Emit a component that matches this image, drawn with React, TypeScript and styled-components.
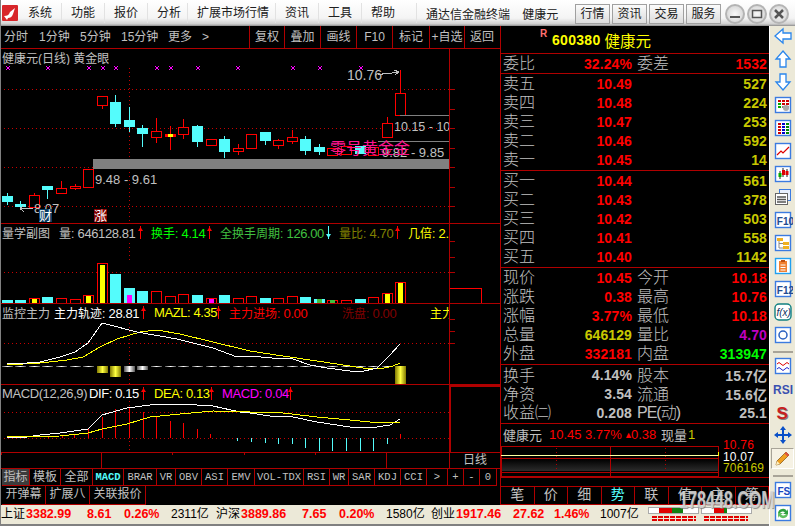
import React from 'react'
import styled, { createGlobalStyle } from 'styled-components'

const CJK = `"Liberation Sans", "Noto Sans CJK SC", sans-serif`
const RED = '#ff0000'
const LINE = '#b00000'
const GRAY = '#c0c0c0'
const CYAN = '#54fcfc'
const OLIVE = '#c8c800'

const GlobalStyle = createGlobalStyle`
  html, body { margin: 0; padding: 0; background: #000; overflow: hidden; }
  * { box-sizing: border-box; }
`

const Window = styled.div`
  position: relative;
  width: 795px;
  height: 526px;
  display: flex;
  flex-direction: column;
  font-family: ${CJK};
  background: #000;
  border-left: 1px solid #808080;
  overflow: hidden;
`

/* ---------- title bar ---------- */

const TitleBar = styled.div`
  height: 26px;
  flex: none;
  display: flex;
  align-items: center;
  background: linear-gradient(#ffffff, #f4f4f4 70%, #cfcfcf 92%, #8c8c8c);
  font-size: 12px;
  color: #202020;
`

const Logo = styled.svg`
  width: 16px;
  height: 16px;
  margin: 0 10px 0 1px;
  flex: none;
`

const MenuItem = styled.div<{ $w: number }>`
  width: ${p => p.$w}px;
  flex: none;
  height: 20px;
  line-height: 20px;
  white-space: nowrap;
  background: linear-gradient(#e2e2e2, #e2e2e2) no-repeat calc(100% - 9px) 0 / 1px 100%;
`

const TitleInfo = styled.div`
  width: 149px;
  flex: none;
  white-space: nowrap;
  word-spacing: 9px;
`

const TitleButton = styled.div`
  width: 35px;
  height: 20px;
  margin-right: 2px;
  margin-top: 2px;
  flex: none;
  border: 1px solid #a0a0a0;
  background: linear-gradient(#fbfbfb, #dcdcdc);
  text-align: center;
  line-height: 18px;
`

const RoundButton = styled.div`
  width: 20px;
  height: 20px;
  margin-left: 2px;
  margin-top: 2px;
  flex: none;
  border-radius: 50%;
  border: 2px solid #b4b4b4;
  background: radial-gradient(#f8f8f8, #cfcfcf);
  display: flex;
  align-items: center;
  justify-content: center;
`

/* ---------- layout ---------- */

const Below = styled.div`
  flex: 1;
  min-height: 0;
  display: flex;
`

const Content = styled.div`
  width: 768px;
  flex: none;
  display: flex;
  flex-direction: column;
`

const MainRow = styled.div`
  height: 479px;
  flex: none;
  display: flex;
`

const LeftColumn = styled.div`
  width: 499px;
  flex: none;
  display: flex;
  flex-direction: column;
`

/* ---------- top tabs ---------- */

const PeriodBar = styled.div`
  height: 23px;
  flex: none;
  display: flex;
  align-items: stretch;
  border-bottom: 1px solid ${LINE};
  color: ${GRAY};
  font-size: 12px;
`

const PeriodItem = styled.div<{ $w: number; $pad?: number }>`
  width: ${p => p.$w}px;
  padding-left: ${p => p.$pad || 0}px;
  flex: none;
  line-height: 22px;
  white-space: nowrap;
`

const PeriodButton = styled.div<{ $w: number }>`
  width: ${p => p.$w}px;
  flex: none;
  border-left: 1px solid ${LINE};
  text-align: center;
  line-height: 22px;
  white-space: nowrap;
`

/* ---------- chart panes ---------- */

const Pane = styled.div<{ $h: number }>`
  height: ${p => p.$h}px;
  flex: none;
  display: flex;
  border-bottom: 1px solid ${LINE};
`

const PaneMain = styled.div`
  width: 448px;
  flex: none;
  display: flex;
  flex-direction: column;
  overflow: hidden;
`

const PaneAxis = styled.div`
  flex: 1;
  border-left: 1px solid ${LINE};
  min-width: 0;
`

const BoxedAxis = styled(PaneAxis)`
  border-left: 2px solid ${LINE};
  border-top: 2px solid ${LINE};
`

const Legend = styled.div`
  height: 16px;
  flex: none;
  display: flex;
  align-items: center;
  padding-left: 1px;
  white-space: nowrap;
  overflow: hidden;
`

const LegendItem = styled.span<{ $w?: number; $c: string }>`
  ${p => (p.$w ? `width: ${p.$w}px; flex: none;` : '')}
  color: ${p => p.$c};
  font-size: 13px;
  letter-spacing: -0.4px;
  display: block;
  overflow: hidden;
`

const LegendLabel = styled.span`
  font-size: 12px;
  letter-spacing: 0;
`

const MarkSlot = styled.svg`
  width: 11px;
  height: 15px;
  flex: none;
  margin-left: -5px;
  margin-right: 5px;
`

const ChartSvg = styled.svg`
  display: block;
  flex: none;
  shape-rendering: crispEdges;
`

const TimeAxis = styled.div`
  height: 16px;
  flex: none;
  display: flex;
  border-bottom: 1px solid ${LINE};
`

const TimeCell = styled.div<{ $w: number }>`
  width: ${p => p.$w}px;
  flex: none;
  border-right: 1px solid ${LINE};
  position: relative;
`

const TimeTick = styled.i<{ $x: number }>`
  position: absolute;
  left: ${p => p.$x}px;
  top: 0;
  width: 1px;
  height: 2px;
  background: ${LINE};
`

const TimeLabel = styled.div`
  flex: 1;
  text-align: center;
  color: ${GRAY};
  font-size: 12px;
  line-height: 14px;
`

const BottomTabs = styled.div<{ $h: number }>`
  height: ${p => p.$h}px;
  flex: none;
  display: flex;
  color: ${GRAY};
  padding-left: 1px;
`

const TabCell = styled.div<{ $w: number; $on?: boolean; $c?: string; $mono?: boolean }>`
  width: ${p => p.$w}px;
  flex: none;
  height: 100%;
  border-right: 1px solid ${LINE};
  border-bottom: 1px solid ${LINE};
  background: ${p => (p.$on ? '#3c3c3c' : 'transparent')};
  color: ${p => p.$c || GRAY};
  text-align: center;
  line-height: 16px;
  white-space: nowrap;
  overflow: hidden;
  font-family: ${p => (p.$mono ? `"Liberation Mono", monospace` : CJK)};
  font-size: ${p => (p.$mono ? '10.5px' : '12px')};
  font-weight: ${p => (p.$c ? 700 : 400)};
`

/* ---------- quote panel ---------- */

const QuotePanel = styled.div`
  flex: 1;
  min-width: 0;
  border-left: 1px solid ${LINE};
  display: flex;
  flex-direction: column;
`

const QuoteTitle = styled.div`
  height: 28px;
  flex: none;
  border-bottom: 1px solid ${LINE};
  padding-left: 39px;
  display: flex;
  align-items: center;
  color: #ffff00;
  white-space: nowrap;
`

const RMark = styled.span`
  color: #ff7070;
  font-size: 10px;
  font-weight: 700;
  width: 12px;
  margin-top: -12px;
`

const QuoteCode = styled.span`
  font-size: 14px;
  font-weight: 700;
  letter-spacing: 0.3px;
`

const QuoteName = styled.span`
  font-size: 15.5px;
  margin-left: 4px;
`

const Section = styled.div<{ $rows: number; $pad?: number }>`
  flex: none;
  height: ${p => p.$rows * 19 + (p.$pad || 0)}px;
  border-bottom: 1px solid ${LINE};
  padding-left: 2px;
`

const QuoteRow = styled.div`
  height: 19px;
  display: grid;
  grid-template-columns: 34px 95px 5px 34px 96px;
  align-items: center;
  white-space: nowrap;
`

const RowLabel = styled.span<{ $tight?: boolean }>`
  color: ${GRAY};
  font-size: 16px;
  line-height: 19px;
  font-weight: 300;
  letter-spacing: ${p => (p.$tight ? '-1px' : '0')};
`

const RowValue = styled.span<{ $c: string }>`
  color: ${p => p.$c};
  font-size: 14px;
  font-weight: 700;
  text-align: right;
  letter-spacing: 0.1px;
`

const TickerRow = styled.div`
  height: 22px;
  flex: none;
  display: flex;
  align-items: center;
  padding-left: 2px;
  padding-bottom: 1px;
  font-size: 13px;
  white-space: nowrap;
`

const TickerCell = styled.span<{ $w: number; $c: string; $small?: boolean }>`
  width: ${p => p.$w}px;
  flex: none;
  color: ${p => p.$c};
  font-size: ${p => (p.$small ? '9px' : '13px')};
`

const MiniRow = styled.div`
  height: 31px;
  flex: none;
  display: flex;
`

const MiniLabels = styled.div`
  padding-left: 4px;
  margin-top: -6px;
  display: flex;
  flex-direction: column;
`

const MiniLabel = styled.span<{ $c: string }>`
  color: ${p => p.$c};
  font-size: 12px;
  line-height: 11.5px;
  letter-spacing: 0.2px;
`

const MiniGap = styled.div`
  height: 10px;
  flex: none;
  border-top: 1px solid ${LINE};
  border-bottom: 1px solid ${LINE};
`

const PanelTabs = styled.div`
  flex: 1;
  display: flex;
  border-bottom: 1px solid ${LINE};
`

const PanelTab = styled.div<{ $on?: boolean }>`
  flex: 1;
  border-right: 1px solid ${LINE};
  text-align: center;
  font-size: 14px;
  line-height: 15px;
  color: ${p => (p.$on ? CYAN : GRAY)};
`

/* ---------- status bar ---------- */

const StatusBar = styled.div`
  height: 21px;
  flex: none;
  display: flex;
  align-items: flex-start;
  background: linear-gradient(#ece9d8 0, #ece9d8 19px, #808080 19px);
  white-space: nowrap;
  color: #000;
`

const StatusCell = styled.span<{ $w: number; $hot?: boolean }>`
  width: ${p => p.$w}px;
  flex: none;
  line-height: 19px;
  color: ${p => (p.$hot ? RED : '#000')};
  font-weight: ${p => (p.$hot ? 700 : 400)};
  font-size: ${p => (p.$hot ? '12.5px' : '12px')};
`

const StatusMini = styled.svg`
  flex: none;
  width: 120px;
  height: 18px;
  shape-rendering: crispEdges;
`

/* ---------- sidebar ---------- */

const Sidebar = styled.div`
  flex: 1;
  min-width: 0;
  background: #ece9d8;
  display: flex;
  flex-direction: column;
  gap: 3px;
  align-items: center;
  border-left: 1px solid #fff;
`

const ToolIcon = styled.svg`
  width: 20px;
  height: 20px;
  flex: none;
  text {
    font-family: "Liberation Sans", sans-serif;
  }
`

const ToolSep = styled.div`
  width: 20px;
  height: 5px;
  flex: none;
  border-bottom: 2px solid #a8a498;
`

const PencilBox = styled.div`
  width: 23px;
  height: 21px;
  flex: none;
  display: flex;
  align-items: center;
  justify-content: center;
  background: #f6f2e4;
  border-top: 1px solid #a8a498;
  border-left: 1px solid #a8a498;
  border-right: 1px solid #fff;
  border-bottom: 1px solid #fff;
`

const Watermark = styled.div`
  position: absolute;
  left: 657px;
  top: 487px;
  width: 140px;
  font-family: "Liberation Sans", sans-serif;
  font-size: 23px;
  font-weight: 700;
  color: rgba(215, 215, 215, 0.9);
  text-shadow: 1px 1px 1px rgba(120, 120, 120, 0.8);
  transform: scaleX(0.7);
  white-space: nowrap;
  pointer-events: none;
`

/* ---------- data ---------- */

const LEFTS = [2, 15, 29, 42, 56, 70, 83, 97, 110, 124, 137, 151, 165, 178, 192, 206, 219, 233, 246, 260, 273, 287, 300, 314, 327, 341, 355, 368, 382, 395]

// box top, box bottom, high, low, up = red hollow
const CANDLES: [number, number, number, number, boolean][] = [
  [196, 202, 193, 205, false],
  [204, 207, 201, 210, false],
  [195, 207, 193, 207, true],
  [186, 190, 186, 199, false],
  [188, 193, 181, 193, true],
  [186, 188, 184, 190, true],
  [169, 187, 169, 187, true],
  [96, 105, 96, 109, true],
  [102, 124, 95, 127, false],
  [120, 127, 107, 132, false],
  [128, 134, 125, 147, false],
  [131, 137, 118, 143, true],
  [135, 136, 126, 150, true],
  [127, 134, 119, 139, true],
  [126, 142, 125, 147, false],
  [139, 145, 139, 145, true],
  [139, 152, 136, 158, false],
  [148, 151, 144, 155, true],
  [134, 148, 134, 148, true],
  [132, 141, 132, 145, false],
  [140, 145, 139, 149, true],
  [137, 141, 130, 144, true],
  [139, 151, 136, 155, false],
  [147, 152, 144, 155, false],
  [148, 155, 148, 155, true],
  [146, 154, 146, 154, true],
  [146, 154, 146, 154, false],
  [147, 155, 147, 155, true],
  [123, 137, 117, 137, true],
  [93, 115, 70, 115, true],
]

// top of volume bar, inner bar colour, inner top
const VOLUMES: [number, string?, number?][] = [
  [300], [300], [298, '#ffff00', 299], [297], [298], [299], [295, '#ffff00', 296], [263, '#ffff00', 265],
  [274], [288, '#ff00ff', 295], [291], [291], [296], [294], [295], [298, '#ff00ff', 299],
  [295], [298], [296], [298], [298], [296], [297], [299, '#40c040', 299],
  [300, '#40c040', 300], [300], [299], [297], [293, '#ffff00', 294], [282, '#ffff00', 283],
]

const MARKS = [8, 48, 89, 103, 116, 157, 171, 198, 238, 293, 320, 361]

const WHITE_A = '7,363 27,363 40,362 60,357 75,352 88,343 102,323 137,332 177,339 213,348 237,357 250,356 272,358 293,359 310,365 327,368 350,371 360,372 377,368 390,355 400,344'
const YELLOW_A = '7,365 40,363 67,360 83,357 100,347 117,339 140,332 157,330 180,334 213,342 250,351 283,356 317,361 343,365 363,368 380,369 393,366 400,363'
const WHITE_B = '7,437 27,437 40,435 60,433 88,429 102,415 127,408 150,405 180,404 213,406 240,412 250,413 270,416 293,417 317,422 350,427 377,427 390,425 400,419'
const YELLOW_B = '7,437 60,436 88,433 102,429 127,424 150,417 180,414 213,411 250,412 283,413 317,417 350,420 370,422 400,422'

// MACD bars: x, end y (from zero line at 438)
const MACD: [number, number, string][] = [
  [48, 436, RED], [62, 435, RED], [74, 435, RED], [88, 428, RED], [102, 417, RED], [115, 409, RED], [129, 408, RED],
  [143, 412, RED], [156, 416, RED], [170, 421, RED], [183, 423, RED], [197, 429, RED], [210, 434, RED],
  [237, 441, CYAN], [251, 442, CYAN], [265, 443, CYAN], [278, 444, CYAN], [292, 444, CYAN], [305, 448, CYAN],
  [319, 451, CYAN], [332, 451, CYAN], [346, 451, CYAN], [360, 451, CYAN], [373, 451, CYAN], [387, 444, CYAN], [400, 434, RED],
]

const ASKS = [['卖五', '10.49', '527'], ['卖四', '10.48', '224'], ['卖三', '10.47', '253'], ['卖二', '10.46', '592'], ['卖一', '10.45', '14']]
const BIDS = [['买一', '10.44', '561'], ['买二', '10.43', '378'], ['买三', '10.42', '503'], ['买四', '10.41', '558'], ['买五', '10.40', '1142']]
const STATS: [string, string, string, string, string, string][] = [
  ['现价', '10.45', RED, '今开', '10.18', RED],
  ['涨跌', '0.38', RED, '最高', '10.76', RED],
  ['涨幅', '3.77%', RED, '最低', '10.18', RED],
  ['总量', '646129', OLIVE, '量比', '4.70', '#c000c0'],
  ['外盘', '332181', RED, '内盘', '313947', '#00ff00'],
]
const EXTRAS = [
  ['换手', '4.14%', '股本', '15.7亿'],
  ['净资', '3.54', '流通', '15.6亿'],
  ['收益㈡', '0.208', 'PE(动)', '25.1'],
]

const INDICATORS: [string, number, string?][] = [
  ['MACD', 31, CYAN], ['BRAR', 33], ['VR', 19], ['OBV', 26], ['ASI', 26], ['EMV', 27], ['VOL-TDX', 49],
  ['RSI', 26], ['WR', 19], ['SAR', 26], ['KDJ', 26], ['CCI', 26], ['>', 21], ['+', 16], ['-', 16], ['0', 17],
]

/* ---------- small drawings ---------- */

const Mark = ({ c, down }: { c: string; down?: boolean }) => (
  <MarkSlot viewBox="0 0 11 15">
    <line x1="5.5" y1="1" x2="5.5" y2="14" stroke={c} strokeWidth="1" />
    <path d={down ? 'M3 9h5l-2.5 4z' : 'M3 6h5L5.5 2z'} fill={c} />
  </MarkSlot>
)

const Dotted = ({ y }: { y: number }) => (
  <line x1="0" y1={y + 0.5} x2="449" y2={y + 0.5} stroke="#c80000" strokeDasharray="1 3" />
)

const VDotted = ({ y1, y2 }: { y1: number; y2: number }) => (
  <line x1="129.5" y1={y1} x2="129.5" y2={y2} stroke="#c80000" strokeDasharray="1 3" />
)

function Candle({ i }: { i: number }) {
  const [t, b, hi, lo, up] = CANDLES[i]
  const x = LEFTS[i]
  const cx = x + 5.5
  const c = up ? RED : CYAN
  return (
    <g>
      <line x1={cx} y1={hi} x2={cx} y2={lo} stroke={c} />
      {up ? (
        <rect x={x + 0.5} y={t + 0.5} width={10} height={b - t} fill="#000" stroke={RED} />
      ) : (
        <rect x={x} y={t} width={11} height={b - t} fill={CYAN} />
      )}
    </g>
  )
}

function MainChart() {
  return (
    <ChartSvg width="448" height="158" viewBox="1 65 448 158">
      <Dotted y={89} />
      <Dotted y={128} />
      <Dotted y={167} />
      <Dotted y={206} />
      <VDotted y1={68} y2={222} />
      {MARKS.map(x => (
        <path key={x} d={`M${x - 2} 66l4 4M${x + 2} 66l-4 4`} stroke="#ff00ff" fill="none" strokeWidth="1" />
      ))}
      {LEFTS.map((_, i) => <Candle key={i} i={i} />)}
      <rect x="165" y="134" width="11" height="3" fill={RED} />
      <rect x="168" y="134" width="5" height="3" fill="#ffff00" />
      <rect x="93" y="159" width="356" height="10" fill="#808080" />
      <line x1="400" y1="115.5" x2="449" y2="115.5" stroke="#808080" />
      <line x1="378" y1="141.5" x2="449" y2="141.5" stroke="#808080" />
      <text x="347" y="80" fill={GRAY} fontSize="14" fontFamily="Liberation Sans">10.76</text>
      <path d="M378 75l9-2 5 0 6-1m-4-2l5 2-4 3" stroke={GRAY} fill="none" />
      <text x="394" y="131" fill={GRAY} fontSize="12.5" fontFamily="Liberation Sans">10.15 - 10</text>
      <text x="95" y="184" fill={GRAY} fontSize="13" fontFamily="Liberation Sans">9.48 - 9.61</text>
      <text x="382" y="157" fill={GRAY} fontSize="13" fontFamily="Liberation Sans">9.82 - 9.85</text>
      <text x="330" y="154" fill="#ff1490" fontSize="16" fontFamily="Noto Sans CJK SC">零号黄金金</text>
      <text x="34" y="213" fill={GRAY} fontSize="13" fontFamily="Liberation Sans">8.07</text>
      <path d="M20 208.5h13m-13 0l4-3m-4 3l4 3" stroke={GRAY} fill="none" />
      <rect x="39" y="209" width="13" height="13" fill="#0a3a60" />
      <text x="39" y="220" fill="#fff" fontSize="13" fontFamily="Noto Sans CJK SC">财</text>
      <rect x="94" y="209" width="13" height="13" fill="#800000" />
      <text x="94" y="220" fill="#fff" fontSize="13" fontFamily="Noto Sans CJK SC">涨</text>
    </ChartSvg>
  )
}

function VolumeChart() {
  return (
    <ChartSvg width="448" height="63" viewBox="1 240 448 63">
      <Dotted y={272} />
      <VDotted y1={243} y2={262} />
      {VOLUMES.map(([top, inner, innerTop], i) => {
        const x = LEFTS[i]
        const up = CANDLES[i][4]
        return (
          <g key={x}>
            {up ? (
              <rect x={x + 0.5} y={top + 0.5} width={10} height={303 - top} fill="#000" stroke={RED} />
            ) : (
              <rect x={x} y={top} width={11} height={303 - top} fill={CYAN} />
            )}
            {inner && <rect x={x + 3} y={innerTop} width={5} height={303 - (innerTop as number)} fill={inner} />}
          </g>
        )
      })}
    </ChartSvg>
  )
}

const PILLARS: [number, number, string][] = [
  [97, 373, 'gold'], [110, 377, 'gold'], [124, 372, 'silver'], [137, 370, 'silver'], [395, 384, 'gold'],
]

function FlowChart() {
  return (
    <ChartSvg width="448" height="64" viewBox="1 320 448 64">
      <defs>
        <linearGradient id="gold">
          <stop offset="0" stopColor="#807800" />
          <stop offset="0.5" stopColor="#ffff40" />
          <stop offset="1" stopColor="#807800" />
        </linearGradient>
        <linearGradient id="silver">
          <stop offset="0" stopColor="#505050" />
          <stop offset="0.5" stopColor="#ffffff" />
          <stop offset="1" stopColor="#505050" />
        </linearGradient>
      </defs>
      <Dotted y={343} />
      <VDotted y1={323} y2={384} />
      {LEFTS.map(x => <rect key={x} x={x} y={366} width={11} height={1} fill="url(#silver)" />)}
      {PILLARS.map(([x, b, g]) => <rect key={x} x={x} y={366} width={11} height={b - 366} fill={`url(#${g})`} />)}
      <polyline points={YELLOW_A} fill="none" stroke="#ffff00" strokeWidth="1" />
      <polyline points={WHITE_A} fill="none" stroke="#ffffff" strokeWidth="1" />
    </ChartSvg>
  )
}

function MacdChart() {
  return (
    <ChartSvg width="448" height="51" viewBox="1 401 448 51">
      <Dotted y={412} />
      <Dotted y={438} />
      <VDotted y1={401} y2={452} />
      {MACD.map(([x, y, c]) => (
        <line key={x} x1={x + 0.5} y1={438} x2={x + 0.5} y2={y} stroke={c} />
      ))}
      <polyline points={WHITE_B} fill="none" stroke="#ffffff" strokeWidth="1" />
      <polyline points={YELLOW_B} fill="none" stroke="#ffff00" strokeWidth="1" />
    </ChartSvg>
  )
}

const Ticks = ({ top, h, ys }: { top: number; h: number; ys: number[] }) => (
  <ChartSvg width="50" height={h} viewBox={`450 ${top} 50 ${h}`}>
    {ys.map(y => <line key={y} x1="450" y1={y + 0.5} x2="455" y2={y + 0.5} stroke={LINE} />)}
  </ChartSvg>
)

function MiniChart() {
  return (
    <ChartSvg width="218" height="31" viewBox="0 0 218 31">
      <rect x="0.5" y="0.5" width="217" height="30" fill="#000" stroke={LINE} />
      <defs>
        <linearGradient id="fade" x1="0" y1="0" x2="0" y2="1">
          <stop offset="0" stopColor="#000" />
          <stop offset="1" stopColor="#2c2c2c" />
        </linearGradient>
      </defs>
      <rect x="1" y="13" width="216" height="12" fill="url(#fade)" />
      <line x1="0" y1="12.5" x2="218" y2="12.5" stroke={LINE} />
      <line x1="0" y1="26.5" x2="218" y2="26.5" stroke={LINE} />
      <line x1="109.5" y1="0" x2="109.5" y2="31" stroke={LINE} />
      <line x1="55.5" y1="2" x2="55.5" y2="30" stroke={LINE} strokeDasharray="1 3" />
      <line x1="164.5" y1="2" x2="164.5" y2="30" stroke={LINE} strokeDasharray="1 3" />
      <line x1="0" y1="9.5" x2="217" y2="9.5" stroke="#ffffa0" />
      <line x1="217" y1="6" x2="217" y2="10" stroke="#ffff00" />
    </ChartSvg>
  )
}

const blue = '#3b7be0'

const Frame = ({ children, c = blue }: { children: React.ReactNode; c?: string }) => (
  <ToolIcon viewBox="0 0 20 20">
    <rect x="2.5" y="2.5" width="15" height="15" fill="#fff" stroke={c} strokeWidth="1.4" />
    {children}
  </ToolIcon>
)

const Poly = ({ points }: { points: string }) => (
  <ToolIcon viewBox="0 0 20 20">
    <polygon points={points} fill="#fff" stroke="#2a86ec" strokeWidth="1.3" />
  </ToolIcon>
)

const Rows = ({ cs }: { cs: string[] }) => (
  <>
    {cs.map((c, i) => (
      <rect key={i} x={5 + (i % 3) * 4} y={5 + Math.floor(i / 3) * 3} width="3" height="2" fill={c} />
    ))}
  </>
)

function SidebarTools() {
  return (
    <Sidebar>
      <Poly points="2,10 10,3 10,7 18,7 18,13 10,13 10,17" />
      <Poly points="10,2 17,10 13,10 13,18 7,18 7,10 3,10" />
      <Poly points="10,18 17,10 13,10 13,2 7,2 7,10 3,10" />
      <Frame>
        <Rows cs={['#c00', '#c00', '#c00', '#0a0', '#c00', '#c00', '#0a0', '#888', '#888']} />
        <circle cx="13" cy="13" r="3" fill="#aaa" />
      </Frame>
      <Frame>
        <Rows cs={['#c00', '#00c', '#080', '#c00', '#00c', '#080', '#c00', '#00c', '#080', '#c00', '#00c', '#080']} />
      </Frame>
      <Frame>
        <path d="M4 14l4-4 2 2 6-6" stroke="#d00" fill="none" strokeWidth="1.2" />
      </Frame>
      <Frame>
        <path d="M7 7v8M10 4v9M14 5v8" stroke="#222" />
        <rect x="5.5" y="9" width="3" height="4" fill="#0a0" />
        <rect x="9" y="6" width="3" height="5" fill="#d00" />
        <rect x="12.5" y="7" width="3" height="4" fill="#d00" />
      </Frame>
      <ToolIcon viewBox="0 0 20 20">
        <rect x="6.5" y="2.5" width="11" height="11" fill="#e8f0ff" stroke={blue} />
        <rect x="2.5" y="6.5" width="12" height="11" fill="#fff" stroke="#666" />
        <path d="M4 10h9M4 12.500h9M4 15h9" stroke="#555" strokeWidth="1.4" />
      </ToolIcon>
      <Frame>
        <text x="3.8" y="14.500" fontSize="10" fontWeight="700" fill="#224a90">F10</text>
      </Frame>
      <Frame>
        <rect x="4" y="5" width="6" height="3" fill="#f0b020" />
        <rect x="10" y="9" width="6" height="3" fill="#f0b020" />
        <rect x="10" y="13" width="6" height="3" fill="#f0b020" />
        <path d="M6 8v7h4M6 10.500h4" stroke="#888" fill="none" />
      </Frame>
      <Frame c="#20a0f0">
        <rect x="6" y="5" width="8" height="11" fill="#f08030" />
        <path d="M7.500 9h5M7.500 11.500h5M7.500 14h5" stroke="#fff" />
        <rect x="8" y="4" width="4" height="2" fill="#c05010" />
      </Frame>
      <Frame>
        <text x="3.8" y="14.500" fontSize="10" fontWeight="700" fill="#224a90">F12</text>
      </Frame>
      <ToolIcon viewBox="0 0 20 20">
        <rect x="2" y="2" width="16" height="16" rx="4" fill="#fff" stroke="#108080" strokeWidth="1.4" />
        <text x="3.500" y="14" fontSize="10" fontStyle="italic" fill="#103060">f(x)</text>
      </ToolIcon>
      <Frame>
        <circle cx="10" cy="10" r="4" fill="none" stroke="#2a60c0" strokeWidth="1.5" />
      </Frame>
      <ToolSep />
      <Frame>
        <path d="M4 8q2-3 4 0t4 0 4 0" stroke="#d00" fill="none" />
        <path d="M4 13q2-3 4 0t4 0 4 0" stroke="#22c" fill="none" />
      </Frame>
      <ToolIcon viewBox="0 0 20 20">
        <text x="0" y="15" fontSize="12" fontWeight="700" fill="#3a50b0">RSI</text>
      </ToolIcon>
      <ToolIcon viewBox="0 0 20 20">
        <text x="4.500" y="18" fontSize="17" fontWeight="700" fill="#808080">S</text>
        <text x="3.500" y="17" fontSize="17" fontWeight="700" fill="#c82020">S</text>
      </ToolIcon>
      <ToolIcon viewBox="0 0 20 20">
        <path d="M10 1l3 4h-2v4h4V7l4 3-4 3v-2h-4v4h2l-3 4-3-4h2v-4H5v2l-4-3 4-3v2h4V5H7z" fill="#0a50c8" />
      </ToolIcon>
      <PencilBox>
        <svg width="17" height="17" viewBox="0 0 17 17">
          <path d="M2 15l1-4L12 2l3 3-9 9z" fill="#f0a020" stroke="#805010" strokeWidth="0.7" />
          <path d="M2 15l1-4 3 3z" fill="#fff0c0" />
          <path d="M12 2l3 3-1.500 1.500-3-3z" fill="#e05040" />
        </svg>
      </PencilBox>
      <ToolSep />
      <Frame>
        <text x="4.500" y="14.500" fontSize="10" fontWeight="700" fill="#1848c0">FS</text>
      </Frame>
      <Frame>
        <path d="M5 10a5 5 0 0 1 9-2l1-2v5h-5l2-1.500a3 3 0 0 0-5 .5z" fill="#30a040" />
        <path d="M15 11a5 5 0 0 1-9 2l-1 2v-5h5l-2 1.500a3 3 0 0 0 5-.5z" fill="#60c060" />
      </Frame>
    </Sidebar>
  )
}

/* ---------- page ---------- */

export default function App() {
  const levelRow = ([label, price, vol]: string[]) => (
    <QuoteRow key={label}>
      <RowLabel>{label}</RowLabel>
      <RowValue $c={RED}>{price}</RowValue>
      <span />
      <span />
      <RowValue $c={OLIVE}>{vol}</RowValue>
    </QuoteRow>
  )

  return (
    <Window>
      <GlobalStyle />
      <TitleBar>
        <Logo viewBox="0 0 16 16">
          <rect width="16" height="16" rx="1" fill="#d8262a" />
          <path d="M2 11c3 0 5-1 6-4l5-4-2 6c-1 3-3 4-5 4l-1 2z" fill="#fff" />
        </Logo>
        <MenuItem $w={43}>系统</MenuItem>
        <MenuItem $w={43}>功能</MenuItem>
        <MenuItem $w={43}>报价</MenuItem>
        <MenuItem $w={40}>分析</MenuItem>
        <MenuItem $w={88}>扩展市场行情</MenuItem>
        <MenuItem $w={43}>资讯</MenuItem>
        <MenuItem $w={43}>工具</MenuItem>
        <MenuItem $w={55}>帮助</MenuItem>
        <TitleInfo>通达信金融终端 健康元</TitleInfo>
        <TitleButton>行情</TitleButton>
        <TitleButton>资讯</TitleButton>
        <TitleButton>交易</TitleButton>
        <TitleButton>服务</TitleButton>
        <RoundButton>
          <svg width="12" height="12" viewBox="0 0 12 12"><rect x="1" y="8" width="10" height="2" fill="#555" /></svg>
        </RoundButton>
        <RoundButton>
          <svg width="12" height="12" viewBox="0 0 12 12"><rect x="1.500" y="2.500" width="9" height="7" fill="none" stroke="#555" strokeWidth="1.500" /></svg>
        </RoundButton>
        <RoundButton>
          <svg width="12" height="12" viewBox="0 0 12 12"><path d="M2 2l8 8M10 2l-8 8" stroke="#555" strokeWidth="2.500" /></svg>
        </RoundButton>
      </TitleBar>
      <Below>
        <Content>
          <MainRow>
            <LeftColumn>
              <PeriodBar>
                <PeriodItem $w={38} $pad={3}>分时</PeriodItem>
                <PeriodItem $w={41}>1分钟</PeriodItem>
                <PeriodItem $w={41}>5分钟</PeriodItem>
                <PeriodItem $w={47}>15分钟</PeriodItem>
                <PeriodItem $w={34}>更多</PeriodItem>
                <PeriodItem $w={47}>&gt;</PeriodItem>
                <PeriodButton $w={35}>复权</PeriodButton>
                <PeriodButton $w={36}>叠加</PeriodButton>
                <PeriodButton $w={36}>画线</PeriodButton>
                <PeriodButton $w={36}>F10</PeriodButton>
                <PeriodButton $w={37}>标记</PeriodButton>
                <PeriodButton $w={35}>+自选</PeriodButton>
                <PeriodButton $w={35}>返回</PeriodButton>
              </PeriodBar>
              <Pane $h={175}>
                <PaneMain>
                  <Legend>
                    <LegendItem $c={GRAY}><LegendLabel>健康元(日线) 黄金眼</LegendLabel></LegendItem>
                  </Legend>
                  <MainChart />
                </PaneMain>
                <PaneAxis>
                  <Ticks top={49} h={174} ys={[89, 109, 128, 148, 167, 187, 206]} />
                </PaneAxis>
              </Pane>
              <Pane $h={80}>
                <PaneMain>
                  <Legend>
                    <LegendItem $w={57} $c={GRAY}><LegendLabel>量学副图</LegendLabel></LegendItem>
                    <LegendItem $w={81} $c={GRAY}><LegendLabel>量:</LegendLabel> 646128.81</LegendItem>
                    <Mark c={RED} />
                    <LegendItem $w={58} $c="#00ff00"><LegendLabel>换手:</LegendLabel> 4.14</LegendItem>
                    <Mark c={RED} />
                    <LegendItem $w={108} $c="#40c040"><LegendLabel>全换手周期:</LegendLabel> 126.00</LegendItem>
                    <Mark c={CYAN} down />
                    <LegendItem $w={58} $c="#808000"><LegendLabel>量比:</LegendLabel> 4.70</LegendItem>
                    <Mark c={RED} />
                    <LegendItem $c="#ffff00"><LegendLabel>几倍:</LegendLabel> 2.</LegendItem>
                  </Legend>
                  <VolumeChart />
                </PaneMain>
                <PaneAxis>
                  <ChartSvg width="50" height="79" viewBox="450 224 50 79">
                    <line x1="450" y1="241.500" x2="455" y2="241.500" stroke={LINE} />
                    <line x1="450" y1="257.500" x2="455" y2="257.500" stroke={LINE} />
                    <line x1="450" y1="272.500" x2="455" y2="272.500" stroke={LINE} />
                    <path d="M450 288.500h31.500v15" fill="none" stroke={RED} />
                  </ChartSvg>
                </PaneAxis>
              </Pane>
              <Pane $h={81}>
                <PaneMain>
                  <Legend>
                    <LegendItem $w={52} $c={GRAY}><LegendLabel>监控主力</LegendLabel></LegendItem>
                    <LegendItem $w={89} $c="#ffffff"><LegendLabel>主力轨迹:</LegendLabel> 28.81</LegendItem>
                    <Mark c={RED} />
                    <LegendItem $w={64} $c="#ffff00">MAZL: 4.35</LegendItem>
                    <Mark c={RED} />
                    <LegendItem $w={113} $c={RED}><LegendLabel>主力进场:</LegendLabel> 0.00</LegendItem>
                    <LegendItem $w={88} $c="#800000"><LegendLabel>洗盘:</LegendLabel> 0.00</LegendItem>
                    <LegendItem $c="#ffff00"><LegendLabel>主力</LegendLabel></LegendItem>
                  </Legend>
                  <FlowChart />
                </PaneMain>
                <PaneAxis>
                  <Ticks top={304} h={80} ys={[319, 331, 343]} />
                </PaneAxis>
              </Pane>
              <Pane $h={68}>
                <PaneMain>
                  <Legend>
                    <LegendItem $w={87} $c={GRAY}>MACD(12,26,9)</LegendItem>
                    <LegendItem $w={54} $c="#ffffff">DIF: 0.15</LegendItem>
                    <Mark c={RED} />
                    <LegendItem $w={57} $c="#ffff00">DEA: 0.13</LegendItem>
                    <Mark c={RED} />
                    <LegendItem $w={68} $c="#ff00ff">MACD: 0.04</LegendItem>
                    <Mark c={RED} />
                  </Legend>
                  <MacdChart />
                </PaneMain>
                <BoxedAxis />
              </Pane>
              <TimeAxis>
                <TimeCell $w={101}>
                  <TimeTick $x={0} />
                </TimeCell>
                <TimeCell $w={285}>
                  <TimeTick $x={70} />
                  <TimeTick $x={142} />
                  <TimeTick $x={213} />
                </TimeCell>
                <TimeCell $w={63} />
                <TimeLabel>日线</TimeLabel>
              </TimeAxis>
              <BottomTabs $h={17}>
                <TabCell $w={28} $on>指标</TabCell>
                <TabCell $w={31}>模板</TabCell>
                <TabCell $w={32}>全部</TabCell>
                {INDICATORS.map(([name, w, c]) => (
                  <TabCell key={name} $w={w} $c={c} $mono>{name}</TabCell>
                ))}
              </BottomTabs>
              <BottomTabs $h={19}>
                <TabCell $w={44}>开弹幕</TabCell>
                <TabCell $w={44}>扩展八</TabCell>
                <TabCell $w={56}>关联报价</TabCell>
              </BottomTabs>
            </LeftColumn>
            <QuotePanel>
              <QuoteTitle>
                <RMark>R</RMark>
                <QuoteCode>600380</QuoteCode>
                <QuoteName>健康元</QuoteName>
              </QuoteTitle>
              <Section $rows={1} $pad={1}>
                <QuoteRow>
                  <RowLabel>委比</RowLabel>
                  <RowValue $c={RED}>32.24%</RowValue>
                  <span />
                  <RowLabel>委差</RowLabel>
                  <RowValue $c={RED}>1532</RowValue>
                </QuoteRow>
              </Section>
              <Section $rows={5} $pad={2}>{ASKS.map(levelRow)}</Section>
              <Section $rows={5} $pad={2}>{BIDS.map(levelRow)}</Section>
              <Section $rows={5} $pad={2}>
                {STATS.map(([a, v1, c1, b, v2, c2]) => (
                  <QuoteRow key={a}>
                    <RowLabel>{a}</RowLabel>
                    <RowValue $c={c1}>{v1}</RowValue>
                    <span />
                    <RowLabel>{b}</RowLabel>
                    <RowValue $c={c2}>{v2}</RowValue>
                  </QuoteRow>
                ))}
              </Section>
              <Section $rows={3} $pad={2}>
                {EXTRAS.map(([a, v1, b, v2]) => (
                  <QuoteRow key={a}>
                    <RowLabel>{a}</RowLabel>
                    <RowValue $c={GRAY}>{v1}</RowValue>
                    <span />
                    <RowLabel $tight={b.startsWith('PE')}>{b}</RowLabel>
                    <RowValue $c={GRAY}>{v2}</RowValue>
                  </QuoteRow>
                ))}
              </Section>
              <TickerRow>
                <TickerCell $w={46} $c={GRAY}>健康元</TickerCell>
                <TickerCell $w={36} $c={RED}>10.45</TickerCell>
                <TickerCell $w={39} $c={RED}>3.77%</TickerCell>
                <TickerCell $w={7} $c={RED} $small>▲</TickerCell>
                <TickerCell $w={30} $c={RED}>0.38</TickerCell>
                <TickerCell $w={27} $c={GRAY}>现量</TickerCell>
                <TickerCell $w={12} $c={OLIVE}>1</TickerCell>
              </TickerRow>
              <MiniRow>
                <MiniChart />
                <MiniLabels>
                  <MiniLabel $c={RED}>10.76</MiniLabel>
                  <MiniLabel $c="#ffffff">10.07</MiniLabel>
                  <MiniLabel $c={OLIVE}>706169</MiniLabel>
                </MiniLabels>
              </MiniRow>
              <MiniGap />
              <PanelTabs>
                <PanelTab>笔</PanelTab>
                <PanelTab>价</PanelTab>
                <PanelTab>细</PanelTab>
                <PanelTab $on>势</PanelTab>
                <PanelTab>联</PanelTab>
                <PanelTab>值</PanelTab>
                <PanelTab>主</PanelTab>
                <PanelTab>筹</PanelTab>
              </PanelTabs>
            </QuotePanel>
          </MainRow>
          <StatusBar>
            <StatusCell $w={25}>上证</StatusCell>
            <StatusCell $w={61} $hot>3382.99</StatusCell>
            <StatusCell $w={37} $hot>8.61</StatusCell>
            <StatusCell $w={47} $hot>0.26%</StatusCell>
            <StatusCell $w={45}>2311亿</StatusCell>
            <StatusCell $w={25}>沪深</StatusCell>
            <StatusCell $w={61} $hot>3889.86</StatusCell>
            <StatusCell $w={37} $hot>7.65</StatusCell>
            <StatusCell $w={47} $hot>0.20%</StatusCell>
            <StatusCell $w={45}>1580亿</StatusCell>
            <StatusCell $w={25}>创业</StatusCell>
            <StatusCell $w={57} $hot>1917.46</StatusCell>
            <StatusCell $w={41} $hot>27.62</StatusCell>
            <StatusCell $w={46} $hot>1.46%</StatusCell>
            <StatusCell $w={48}>1007亿</StatusCell>
            <StatusMini viewBox="0 0 120 18">
              <rect x="0.500" y="2.500" width="50" height="6" fill="#fff" stroke="#aaa" />
              <rect x="11" y="3" width="13" height="5" fill="#e00000" />
              <rect x="24" y="3" width="11" height="5" fill="#108010" />
              <rect x="53.500" y="2.500" width="50" height="6" fill="#fff" stroke="#aaa" />
              <rect x="66" y="3" width="10" height="5" fill="#e00000" />
              <rect x="76" y="3" width="3" height="5" fill="#108010" />
              <path d="M4 11.500h44M4 14.500h44M56 11.500h44M56 14.500h44" stroke="#e00000" strokeWidth="2" strokeDasharray="5 1" />
            </StatusMini>
          </StatusBar>
        </Content>
        <SidebarTools />
      </Below>
      <Watermark>178448.COM</Watermark>
    </Window>
  )
}
